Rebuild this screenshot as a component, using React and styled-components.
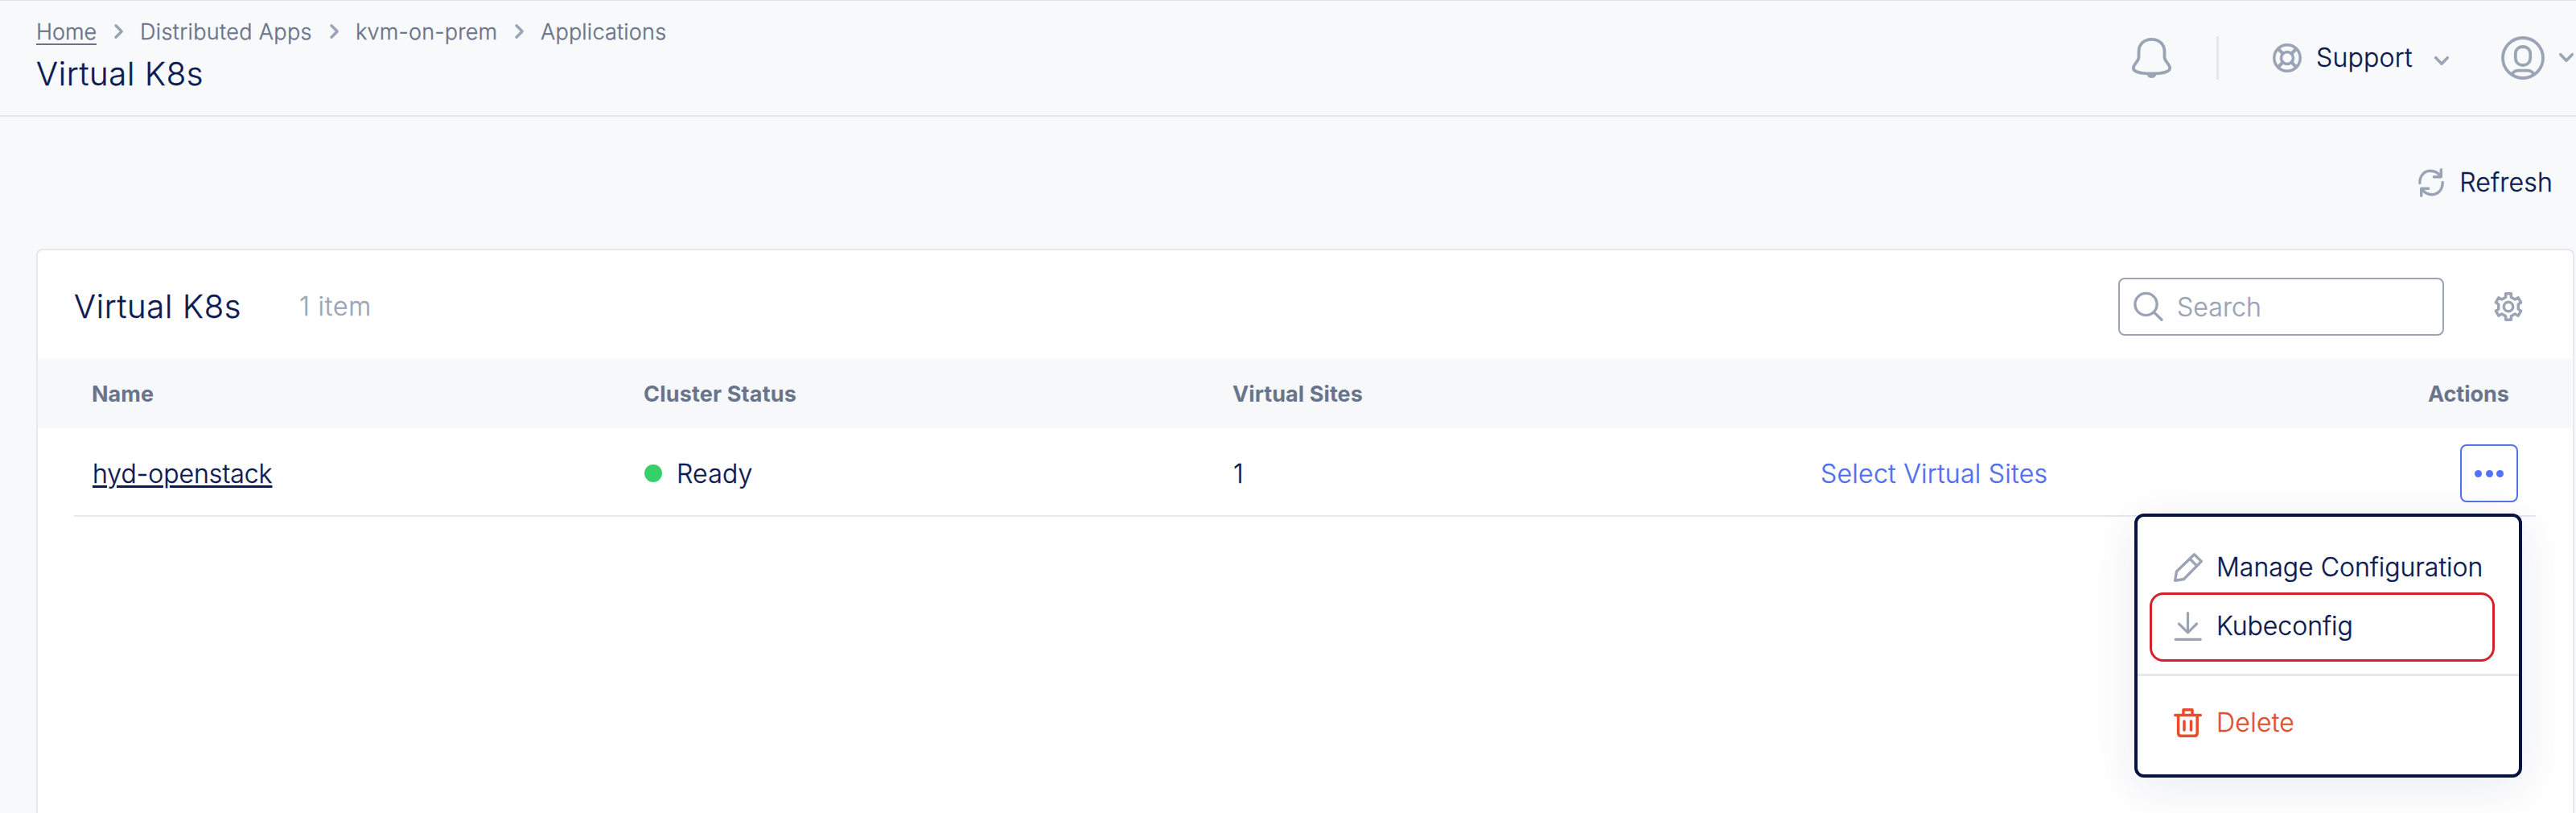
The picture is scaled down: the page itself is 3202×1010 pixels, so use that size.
import React from 'react';
import styled, { createGlobalStyle } from 'styled-components';

const navy = '#0b1a50';
const slate = '#69748a';
const mist = '#9ba4b5';
const blue = '#4f70ee';
const line = '#e6e7ef';

const Global = createGlobalStyle`
  * { box-sizing: border-box; }
  html, body { margin: 0; background: #f7f9fb; }
  body {
    font-family: Inter, "Liberation Sans", sans-serif;
    font-weight: 300;
    font-size: 32px;
    color: ${navy};
    -webkit-text-stroke: 0.35px currentColor;
    overflow: hidden;
  }
  svg { display: block; flex: none; overflow: visible; }
`;

const Page = styled.div`
  width: 3202px;
  height: 1010px;
  overflow: hidden;
  display: flex;
  flex-direction: column;
  background: #f7f9fb;
`;

const Header = styled.header`
  height: 145px;
  flex: none;
  display: flex;
  justify-content: space-between;
  border-top: 1px solid #dfe1e6;
  border-bottom: 2px solid ${line};
  padding-left: 45px;
`;

const Heading = styled.div`
  padding-top: 21px;
`;

const Crumbs = styled.nav`
  height: 34px;
  display: flex;
  align-items: center;
  font-size: 27px;
  line-height: 35px;
  color: ${slate};
`;

const Crumb = styled.a`
  width: ${(p) => p.$w}px;
  white-space: nowrap;
  letter-spacing: ${(p) => p.$ls || 0}px;
  border-bottom: 2px solid ${(p) => (p.$underlined ? slate : 'transparent')};
  height: 34px;
`;

const CrumbChevron = styled.svg`
  margin: 0 21px 0 22px;
`;

const Title = styled.h1`
  margin: ${(p) => p.$top || 0}px 0 0;
  font-size: 40px;
  line-height: 48px;
  font-weight: 300;
  white-space: nowrap;
  letter-spacing: 0.72px;
`;

const HeaderTools = styled.div`
  height: 142px;
  display: flex;
  align-items: center;
  padding-right: 3px;
`;

const Separator = styled.div`
  width: 3px;
  height: 54px;
  margin: 0 67px 0 56px;
  background: ${line};
`;

const Label = styled.span`
  line-height: ${(p) => p.$lh || 40}px;
  white-space: nowrap;
  width: ${(p) => (p.$w ? p.$w + 'px' : 'auto')};
  letter-spacing: ${(p) => p.$ls || 0}px;
`;

const Support = styled.div`
  display: flex;
  align-items: center;
  gap: 18px;
  margin-right: 65px;
`;

const Account = styled.div`
  display: flex;
  align-items: center;
  gap: 18px;
`;

const RefreshBar = styled.div`
  height: 164px;
  flex: none;
  display: flex;
  align-items: center;
  justify-content: flex-end;
  gap: 19px;
  padding: 0 29px 0 0;
`;

const Card = styled.section`
  flex: 1;
  margin: 0 2px 0 45px;
  background: #fff;
  border: 2px solid ${line};
  border-bottom: 0;
  border-radius: 8px 8px 0 0;
`;

const Toolbar = styled.div`
  height: 135px;
  display: flex;
  align-items: center;
  padding: 5px 62px 0 45px;
`;

const Count = styled.span`
  color: ${mist};
  margin-left: 72px;
  flex: 1;
  line-height: 40px;
  letter-spacing: 0.85px;
`;

const Search = styled.div`
  width: 405px;
  height: 72px;
  display: flex;
  align-items: center;
  gap: 17px;
  padding-left: 17px;
  margin-right: 62px;
  border: 2px solid ${mist};
  border-radius: 8px;
  color: ${mist};
`;

const Row = styled.div`
  display: grid;
  grid-template-columns: 686px 732px 730px 1fr auto;
  align-items: center;
`;

const HeadRow = styled(Row)`
  height: 86px;
  padding: 1px 78px 0 67px;
  margin-right: 1px;
  background: #f7f8fa;
  color: ${slate};
  font-size: 27px;
  font-weight: 700;
  -webkit-text-stroke: 0;
`;

const BodyRow = styled(Row)`
  height: 110px;
  margin: 0 46px 0 45px;
  padding: 4px 22px 0 23px;
  border-bottom: 2px solid ${line};
`;

const Cell = styled.div`
  display: flex;
  align-items: center;
  line-height: 41px;
  white-space: nowrap;
  letter-spacing: ${(p) => p.$ls || 0}px;
`;

const NameLink = styled.a`
  text-decoration: underline;
  text-decoration-thickness: 2.5px;
  text-underline-offset: 3px;
`;

const SelectLink = styled.a`
  color: ${blue};
`;

const StatusDot = styled.i`
  width: 22px;
  height: 22px;
  border-radius: 50%;
  background: #35d068;
  margin-right: 18px;
`;

const MenuAnchor = styled.div`
  position: relative;
`;

const MoreButton = styled.button`
  width: 72px;
  height: 72px;
  padding: 0;
  display: flex;
  align-items: center;
  justify-content: center;
  gap: 4.5px;
  background: #fff;
  border: 2px solid #5374e8;
  border-radius: 8px;
`;

const MoreDot = styled.i`
  width: 9px;
  height: 9px;
  border-radius: 50%;
  background: #4f73ff;
`;

const Menu = styled.div`
  position: absolute;
  top: 86px;
  right: -5px;
  width: 482px;
  height: 328px;
  background: #fff;
  border: 4px solid #081340;
  border-radius: 12px;
  box-shadow: 0 12px 60px rgba(15, 30, 87, 0.09);
  padding-top: 27px;
`;

const MenuItem = styled.div`
  height: 72px;
  display: flex;
  align-items: center;
  gap: 17px;
  padding-left: 45px;
  color: ${(p) => p.$color || navy};
`;

const Highlighted = styled.div`
  width: 429px;
  height: 86px;
  margin: -5px 0 0 15px;
  border: 3px solid #d2232a;
  border-radius: 17px;
  padding: 2px 0 0 27px;
`;

const HighlightedBody = styled.div`
  height: 74px;
  display: flex;
  align-items: center;
  gap: 17px;
`;

const MenuDivider = styled.div`
  height: 3px;
  margin: 15px 0 22px;
  background: ${line};
`;

const stroke = (w = 3.4, color = mist) => ({
  fill: 'none', stroke: color, strokeWidth: w, strokeLinecap: 'round', strokeLinejoin: 'round',
});

const ChevronRight = () => (
  <CrumbChevron width="11" height="18" viewBox="0 0 11 18" {...stroke(3.4)}><path d="M2 1.700 9.200 9 2 16.300" /></CrumbChevron>
);
const DownChevron = styled.svg`
  margin-top: ${(p) => p.$top || 0}px;
`;
const ChevronDown = ({ top }) => (
  <DownChevron $top={top} width="18" height="12" viewBox="0 0 18 12" {...stroke(3.5)}><path d="M1.700 1.700 9 9.200 16.300 1.700" /></DownChevron>
);
const Bell = () => (
  <svg width="49" height="50" viewBox="0 0 49 50" {...stroke(3.8)}>
    <path d="M24.500 1.800C15 1.800 8.500 8 8.500 17v7c0 5-6.700 9-6.700 13.500 0 5 10 7 22.700 7s22.700-2 22.700-7c0-4.500-6.700-8.500-6.700-13.500v-7c0-9-6.500-15.200-16-15.200Z" />
    <path d="M18.500 45.500h12c-1 3-3.500 4.500-6 4.500s-5-1.500-6-4.500Z" fill={mist} stroke="none" />
  </svg>
);
const Lifebuoy = () => (
  <svg width="36" height="36" viewBox="0 0 36 36" {...stroke(3.5)}>
    <circle cx="18" cy="18" r="16.200" /><circle cx="18" cy="18" r="7.500" />
    <path d="M6.800 6.800 12.500 12.500M29.200 6.800 23.500 12.500M6.800 29.200 12.500 23.500M29.200 29.200 23.500 23.500" strokeWidth="4.200" />
  </svg>
);
const Avatar = () => (
  <svg width="54" height="54" viewBox="0 0 54 54" {...stroke(3.8)}>
    <circle cx="27" cy="27" r="25" />
    <rect x="17.800" y="13" width="18.400" height="23" rx="8.600" />
    <path d="M13.500 47c2-3 4.500-4.300 8-4.300h11c3.500 0 6 1.300 8 4.300" />
  </svg>
);
const RefreshIcon = () => (
  <svg width="32" height="36" viewBox="0 0 32 36" {...stroke(3.4)}>
    <path d="M1.800 18.500C1.800 9 7.500 3.300 15 3.300c5.500 0 10 2.700 13 7.200M28.300 1.700v9h-9" />
    <path d="M30.200 17.500c0 9.500-5.700 15.200-13.200 15.200-5.500 0-10-2.700-13-7.200M3.700 34.300v-9h9" />
  </svg>
);
const SearchIcon = () => (
  <svg width="37" height="36" viewBox="0 0 37 36" {...stroke(3.4)}>
    <circle cx="15.500" cy="15" r="13.600" /><path d="M25.200 24.800 35 34.300" />
  </svg>
);
const Gear = () => (
  <svg width="36" height="36" viewBox="0 0 36 36" {...stroke(3.5)}>
    <path d="M14.600 1.700h6.800v4.600l4.800 2.800 4-2.300 3.400 5.900-3.300 2.200v6.200l3.300 2.200-3.400 5.900-4-2.300-4.800 2.800v4.600h-6.800v-4.600L9.800 26.900l-4 2.300-3.400-5.900 3.300-2.200v-6.200l-3.300-2.200 3.400-5.900 4 2.300 4.800-2.800Z" />
    <circle cx="18" cy="18" r="5.700" />
  </svg>
);
const Pencil = () => (
  <svg width="36" height="36" viewBox="0 0 36 36" {...stroke(3.4)}>
    <path d="M1.700 34.300 3.500 23 25.500 1.700 34.300 10.400 12.500 32.500ZM20 7.300l8.600 8.600" />
  </svg>
);
const Download = () => (
  <svg width="36" height="36" viewBox="0 0 36 36" {...stroke(3.2)}>
    <path d="M17.500 1.600v24M6.500 15l11 10.800L28.500 15M2.200 34.400h31" />
  </svg>
);
const Trash = () => (
  <svg width="36" height="36" viewBox="0 0 36 36" {...stroke(3.5, '#ea4b2c')}>
    <path d="M1.800 8.500h31.500M12 8V1.800h11V8M5.600 9v21.500c0 2.500 1.200 3.800 3.600 3.800h16.400c2.400 0 3.600-1.300 3.600-3.800V9M13 16v11M21.500 16v11" />
  </svg>
);

export default function App() {
  return (
    <Page>
      <Global />
      <Header>
        <Heading>
          <Crumbs>
            <Crumb $w={75} $underlined>Home</Crumb><ChevronRight />
            <Crumb $w={214} $ls={0.36}>Distributed Apps</Crumb><ChevronRight />
            <Crumb $w={176} $ls={0.22}>kvm-on-prem</Crumb><ChevronRight />
            <Crumb $w={157} $ls={0.22}>Applications</Crumb>
          </Crumbs>
          <Title $top={12}>Virtual K8s</Title>
        </Heading>
        <HeaderTools>
          <Bell />
          <Separator />
          <Support>
            <Lifebuoy />
            <Label $w={129} $ls={0.25}>Support</Label>
            <ChevronDown top={7} />
          </Support>
          <Account>
            <Avatar />
            <ChevronDown />
          </Account>
        </HeaderTools>
      </Header>
      <RefreshBar>
        <RefreshIcon />
        <Label $ls={0.2}>Refresh</Label>
      </RefreshBar>
      <Card>
        <Toolbar>
          <Title as="h2">Virtual K8s</Title>
          <Count>1 item</Count>
          <Search><SearchIcon /><Label $lh={41} $ls={0.1}>Search</Label></Search>
          <Gear />
        </Toolbar>
        <HeadRow>
          <Cell>Name</Cell>
          <Cell $ls={0.18}>Cluster Status</Cell>
          <Cell $ls={0.08}>Virtual Sites</Cell>
          <Cell />
          <Cell>Actions</Cell>
        </HeadRow>
        <BodyRow>
          <Cell><NameLink>hyd-openstack</NameLink></Cell>
          <Cell $ls={0.2}><StatusDot />Ready</Cell>
          <Cell>1</Cell>
          <Cell $ls={0.28}><SelectLink>Select Virtual Sites</SelectLink></Cell>
          <MenuAnchor>
            <MoreButton aria-label="Row actions"><MoreDot /><MoreDot /><MoreDot /></MoreButton>
            <Menu>
              <MenuItem><Pencil /><Label $lh={42}>Manage Configuration</Label></MenuItem>
              <Highlighted>
                <HighlightedBody><Download /><Label>Kubeconfig</Label></HighlightedBody>
              </Highlighted>
              <MenuDivider />
              <MenuItem $color="#e0502f"><Trash /><Label $lh={42} $ls={0.3}>Delete</Label></MenuItem>
            </Menu>
          </MenuAnchor>
        </BodyRow>
      </Card>
    </Page>
  );
}
